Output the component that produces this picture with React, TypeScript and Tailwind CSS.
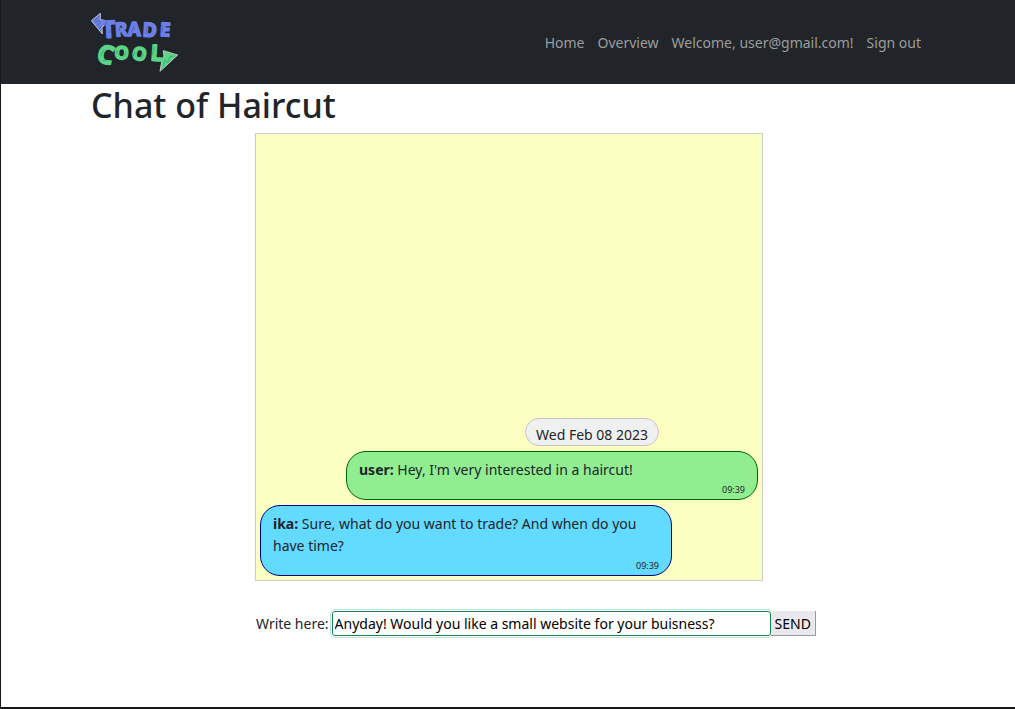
import { useState } from "react";

type Message = {
  id: number;
  author: string;
  text: string;
  time: string;
  own: boolean;
};

const messages: Message[] = [
  { id: 1, author: "user", text: "Hey, I'm very interested in a haircut!", time: "09:39", own: true },
  {
    id: 2,
    author: "ika",
    text: "Sure, what do you want to trade? And when do you have time?",
    time: "09:39",
    own: false,
  },
];

const navLinks = ["Home", "Overview", "Welcome, user@gmail.com!", "Sign out"];

const logoLetters = [
  { char: "T", x: 87, y: 101, turn: -3, size: 70, color: "#6b7fe8" },
  { char: "R", x: 125, y: 96, turn: -4, size: 57, color: "#6b7fe8" },
  { char: "A", x: 163, y: 96, turn: 0, size: 56, color: "#6b7fe8" },
  { char: "D", x: 208, y: 98, turn: 4, size: 58, color: "#6b7fe8" },
  { char: "E", x: 254, y: 96, turn: 4, size: 56, color: "#6b7fe8" },
  { char: "C", x: 71, y: 178, turn: 14, size: 76, color: "#5bd487" },
  { char: "O", x: 123, y: 165, turn: 5, size: 54, color: "#5bd487" },
  { char: "O", x: 174, y: 168, turn: 14, size: 54, color: "#5bd487" },
  { char: "L", x: 229, y: 170, turn: 4, size: 66, color: "#5bd487" },
];

function Logo() {
  return (
    <svg viewBox="33 24 264 180" className="h-[60px] w-[88px]" role="img" aria-label="Trade Cool">
      <g strokeWidth="3" strokeLinejoin="round">
        <path d="M34 50 L61 28 L61 47 L74 49 L72 66 L66 68 L67 90 Z" fill="#6b7fe8" stroke="#b9bfd0" />
        <path d="M250 140 L293 153 L240 202 L245 174 L240 168 L252 158 Z" fill="#5bd487" stroke="#b9c8c0" />
      </g>
      {logoLetters.map((l, i) => (
        <text
          key={i}
          x={l.x}
          y={l.y}
          transform={`rotate(${l.turn} ${l.x} ${l.y})`}
          textAnchor="middle"
          fontSize={l.size}
          fill={l.color}
          stroke={l.color}
          strokeWidth="5"
          strokeLinejoin="round"
          className="font-['Noto_Sans',sans-serif] font-bold"
        >
          {l.char}
        </text>
      ))}
      <g fill="none" strokeWidth="2" strokeLinecap="round" strokeLinejoin="round" opacity="0.6">
        <path
          d="M44 49 L58 38 M47 55 L60 50 M54 62 L61 56 M60 72 L63 66 M75 62 L80 54 M86 86 L92 78 M117 80 L121 66 M155 84 L161 68 M198 88 L201 66 M246 84 L248 64"
          stroke="#34407f"
        />
        <path
          d="M62 156 L70 140 M70 170 L80 168 M108 150 L112 140 M133 157 L138 148 M160 156 L164 144 M185 162 L190 152 M218 152 L223 130 M250 184 L256 168 L264 176 L270 158 L280 156"
          stroke="#216f43"
        />
      </g>
    </svg>
  );
}

function Bubble({ message }: { message: Message }) {
  const tone = message.own
    ? "self-end border-[#006400] bg-[#90ee90]"
    : "self-start border-[#00008b] bg-[#63daff]";
  return (
    <li className={`w-[412px] max-w-full rounded-[20px] border px-3 pt-[7px] ${tone}`}>
      <p className="leading-[22px]">
        <b>{message.author}:</b> {message.text}
      </p>
      <time className="block text-right text-[9px] leading-[18px]">{message.time}</time>
    </li>
  );
}

export default function App() {
  const [draft, setDraft] = useState("Anyday! Would you like a small website for your buisness?");

  return (
    <div className="flex min-h-screen flex-col border-b-2 border-l border-b-[#17181a] border-l-[#17181a] bg-white font-['Noto_Sans',sans-serif] text-[14px] leading-[22px] text-[#212529]">
      <header className="bg-[#212529]">
        <div className="mx-auto flex w-full max-w-[858px] items-center justify-between py-3 pr-4 pl-3">
          <a href="#">
            <Logo />
          </a>
          <nav className="flex flex-wrap gap-[13px] pt-0.5 text-[#9b9d9e]">
            {navLinks.map((label) => (
              <a key={label} href="#" className="hover:text-white">
                {label}
              </a>
            ))}
          </nav>
        </div>
      </header>

      <main className="mx-auto w-full max-w-[858px] px-3">
        <h1 className="mb-[7px] text-[34px] leading-[42px] font-medium">Chat of Haircut</h1>

        <div className="mx-auto w-full max-w-[510px] pl-0.5">
          <section
            aria-label="Messages"
            className="flex min-h-[448px] flex-col justify-end gap-[5px] border border-[#cccccc] bg-[#fbffc1] p-1"
          >
            <div className="ml-[265px] self-start rounded-[14px] border border-[#c4c4cc] bg-[#f0f0f0] px-[10px] pt-[6px] leading-5 whitespace-nowrap">
              Wed Feb 08 2023
            </div>
            <ul className="flex flex-col gap-[5px]">
              {messages.map((m) => (
                <Bubble key={m.id} message={m} />
              ))}
            </ul>
          </section>

          <form className="mt-[30px] flex items-center" onSubmit={(e) => e.preventDefault()}>
            <label htmlFor="draft" className="mr-[3px] pl-px whitespace-nowrap">
              Write here:
            </label>
            <input
              id="draft"
              type="text"
              value={draft}
              onChange={(e) => setDraft(e.target.value)}
              className="h-[25px] w-[439px] shrink-0 rounded-[3px] border border-[#198754] bg-white px-[2px] text-black outline-1 outline-offset-1 outline-[#bfe5d2]"
            />
            <button
              type="submit"
              className="h-[25px] shrink-0 border-r border-b border-[#9a9a9e] bg-[#e9e9ed] px-1 pt-0.5 text-black"
            >
              SEND
            </button>
          </form>
        </div>
      </main>
    </div>
  );
}
